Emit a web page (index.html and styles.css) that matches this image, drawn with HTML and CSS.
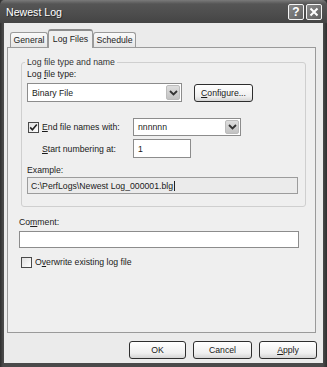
FILE: index.html
```html
<!DOCTYPE html>
<html lang="en">
<head>
    <meta charset="UTF-8">
    <title>Newest Log</title>
    <link rel="stylesheet" href="styles.css">
</head>
<body>
    <div class="window">
        <div class="titlebar">
            <span class="title">Newest Log</span>
            <div class="caption-btns">
                <span class="cap-btn">?</span>
                <span class="cap-btn">
                    <svg width="10" height="10" viewBox="0 0 10 10"><path d="M1.5 1.5 L8.5 8.5 M8.5 1.5 L1.5 8.5" stroke="#fff" stroke-width="2"/></svg>
                </span>
            </div>
        </div>

        <div class="client">
            <div class="tabs">
                <span class="tab tab-general">General</span>
                <span class="tab tab-logfiles active">Log Files</span>
                <span class="tab tab-schedule">Schedule</span>
            </div>

            <div class="panel">
                <fieldset class="group">
                    <legend>Log file type and name</legend>
                    <div class="label">Log <u>f</u>ile type:</div>
                    <div class="row row-type">
                        <div class="combo combo-type">
                            <span class="combo-text">Binary File</span>
                            <span class="combo-arrow"><svg width="9" height="6" viewBox="0 0 9 6"><path d="M1 1 L4.5 4.5 L8 1" fill="none" stroke="#333" stroke-width="1.8"/></svg></span>
                        </div>
                        <button class="btn btn-configure"><u>C</u>onfigure...</button>
                    </div>
                    <div class="row row-end">
                        <span class="field-label">
                            <span class="checkbox checked"><svg width="9" height="9" viewBox="0 0 9 9"><path d="M1.2 4.4 L3.4 6.8 L7.8 1.6" fill="none" stroke="#222" stroke-width="1.6"/></svg></span>
                            <span><u>E</u>nd file names with:</span>
                        </span>
                        <div class="combo combo-names">
                            <span class="combo-text">nnnnnn</span>
                            <span class="combo-arrow"><svg width="9" height="6" viewBox="0 0 9 6"><path d="M1 1 L4.5 4.5 L8 1" fill="none" stroke="#333" stroke-width="1.8"/></svg></span>
                        </div>
                    </div>
                    <div class="row row-start">
                        <span class="field-label indent"><span><u>S</u>tart numbering at:</span></span>
                        <div class="textbox textbox-start">1</div>
                    </div>
                    <div class="label label-example">Example:</div>
                    <div class="textbox readonly"><span>C:\PerfLogs\Newest Log_000001.blg</span><span class="caret"></span></div>
                </fieldset>

                <div class="label label-comment">Co<u>m</u>ment:</div>
                <div class="textbox textbox-comment"></div>

                <div class="check-row">
                    <span class="checkbox"></span>
                    <span>O<u>v</u>erwrite existing log file</span>
                </div>
            </div>

            <div class="buttons">
                <button class="btn btn-ok">OK</button>
                <button class="btn btn-cancel">Cancel</button>
                <button class="btn btn-apply"><u>A</u>pply</button>
            </div>
        </div>
    </div>
</body>
</html>
```

FILE: styles.css
```css
* {
    margin: 0;
    padding: 0;
    box-sizing: border-box;
}

body {
    width: 327px;
    height: 367px;
    overflow: hidden;
    background: #3a3a3a;
    font-family: "Liberation Sans", Arial, sans-serif;
    font-size: 8.7px;
    color: #1a1a1a;
}

u {
    text-decoration: underline;
    text-underline-offset: 1px;
}

.window {
    width: 327px;
    height: 367px;
    display: flex;
    flex-direction: column;
    background: linear-gradient(90deg, #2e2e2e, #4a4a4a 3px, #4a4a4a 323px, #2e2e2e);
}

/* Title bar */
.titlebar {
    height: 23px;
    display: flex;
    align-items: center;
    justify-content: space-between;
    padding: 0 5px 0 6px;
    background: linear-gradient(#7a7a7a, #555 4px, #4d4d4d 14px, #444);
    border-radius: 5px 5px 0 0;
}

.title {
    color: #fff;
    font-size: 10.6px;
    text-shadow: 1px 1px 0 #2a2a2a;
}

.caption-btns {
    display: flex;
    gap: 2px;
    margin-top: 1px;
}

.cap-btn {
    width: 16px;
    height: 16px;
    display: flex;
    align-items: center;
    justify-content: center;
    border: 1px solid #f4f4f4;
    border-radius: 2px;
    background: linear-gradient(135deg, #8a8a8a, #606060);
    color: #fff;
    font-weight: bold;
    font-size: 12px;
}

/* Client area */
.client {
    flex: 1;
    margin: 0 4px 4px 4px;
    background: #ebebeb;
    padding: 6px 6px 0 3px;
    display: flex;
    flex-direction: column;
}

.tabs {
    height: 18px;
    display: flex;
    align-items: flex-end;
    padding-left: 3px;
    position: relative;
    z-index: 1;
}

.tab {
    height: 15px;
    display: flex;
    align-items: center;
    justify-content: center;
    border: 1px solid #9a9a9a;
    border-bottom: none;
    border-radius: 3px 3px 0 0;
    background: linear-gradient(#fafafa, #e6e6e6);
    color: #222;
}

.tab-general { width: 38px; }
.tab-logfiles { width: 45px; }
.tab-schedule { width: 43px; }

.tab.active {
    height: 19px;
    margin-bottom: -1px;
    background: #efefef;
    border-top: 2px solid #8c8c8c;
    padding-bottom: 2px;
}

.panel {
    width: 309px;
    height: 286px;
    border: 1px solid #9a9a9a;
    background: #efefef;
    padding: 9px 9px 0 13px;
}

/* Group box */
.group {
    width: 285px;
    border: 1px solid #cfcfcf;
    border-radius: 3px;
    padding: 1px 7px 12px 5px;
}

.group legend {
    line-height: 11px;
    padding: 0 2px;
    margin-left: -2px;
    color: #333;
}

.label {
    line-height: 11px;
    color: #222;
}

.row {
    display: flex;
    align-items: center;
}

.row-type {
    margin-top: 3px;
    gap: 12px;
}

.row-end {
    margin-top: 16px;
}

.row-start {
    margin-top: 3px;
}

.field-label {
    width: 106px;
    display: flex;
    align-items: center;
    gap: 3px;
    padding-left: 1px;
}

.field-label.indent {
    padding-left: 15px;
}

.label-example {
    margin-top: 7px;
}

.combo {
    height: 19px;
    display: flex;
    align-items: center;
    justify-content: space-between;
    border: 1px solid #8c8c8c;
    background: #fff;
    padding: 1px 1px 1px 4px;
}

.combo-type { width: 155px; }

.combo-names {
    width: 108px;
    height: 18px;
}

.combo-arrow {
    width: 14px;
    height: 100%;
    display: flex;
    align-items: center;
    justify-content: center;
    border-radius: 2px;
    background: linear-gradient(#dedede, #c2c2c2);
    border: 1px solid #bcbcbc;
}

.textbox {
    height: 19px;
    border: 1px solid #8c8c8c;
    background: #fff;
    padding: 0 4px;
    display: flex;
    align-items: center;
}

.textbox-start { width: 58px; }

.textbox.readonly {
    width: 271px;
    height: 17px;
    margin-top: 1px;
    background: #ebebeb;
    border-color: #9c9c9c;
    padding-left: 3px;
}

.caret {
    display: inline-block;
    width: 1px;
    height: 10px;
    background: #222;
    margin-left: 1px;
}

.label-comment {
    margin-top: 10px;
    margin-left: -2px;
}

.textbox-comment {
    width: 280px;
    height: 17px;
    margin-top: 3px;
    margin-left: -2px;
}

.check-row {
    margin-top: 8px;
    height: 12px;
    display: flex;
    align-items: center;
    gap: 3px;
}

.checkbox {
    width: 11px;
    height: 11px;
    border: 1px solid #4a4a4a;
    background: linear-gradient(135deg, #e0e0e0, #fff);
    display: flex;
    align-items: center;
    justify-content: center;
}

/* Buttons */
.btn {
    height: 18px;
    border: 1px solid #2e2e2e;
    border-radius: 3px;
    background: linear-gradient(#ffffff, #efefef 70%, #d4d4d4);
    font-family: inherit;
    font-size: 8.7px;
    color: #1a1a1a;
}

.btn-configure { width: 59px; }

.buttons {
    margin-top: 8px;
    display: flex;
    justify-content: flex-end;
    gap: 7px;
}

.btn-ok { width: 57px; }
.btn-cancel { width: 59px; }
.btn-apply { width: 58px; }
```
